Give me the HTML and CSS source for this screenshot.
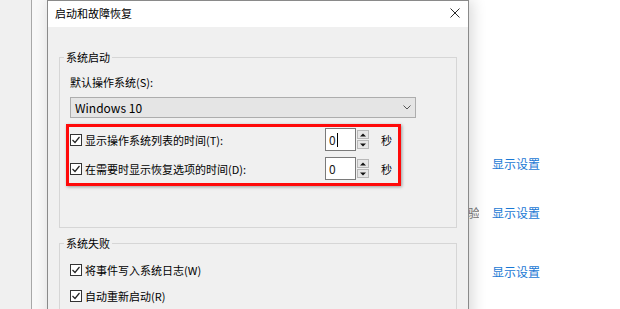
FILE: index.html
```html
<!DOCTYPE html>
<html lang="zh-CN">
<head>
<meta charset="utf-8">
<title>启动和故障恢复</title>
<link rel="stylesheet" href="styles.css">
</head>
<body>
<div class="screen">
  <div class="side-left"></div>
  <div class="side-strip"></div>
  <div class="dialog">
    <div class="titlebar">
      <span class="title">启动和故障恢复</span>
      <svg class="close" width="10" height="10" viewBox="0 0 10 10"><path d="M0.5 0.5 L9.5 9.5 M9.5 0.5 L0.5 9.5" stroke="#2b2b2b" stroke-width="1" fill="none"/></svg>
    </div>
    <div class="dialog-body">
      <fieldset class="group">
        <legend>系统启动</legend>
        <div class="group-body group-body-start">
          <div class="label">默认操作系统(S):</div>
          <div class="select">
            <span class="select-text">Windows 10</span>
            <svg class="chevron" width="8" height="5" viewBox="0 0 8 5"><path d="M0.5 0.5 L4 4 L7.5 0.5" stroke="#555" stroke-width="1" fill="none"/></svg>
          </div>
          <div class="highlight">
            <div class="row">
              <span class="check"><svg width="12" height="12" viewBox="0 0 12 12"><path d="M2.5 6 L5 8.5 L9.5 3" stroke="#222" stroke-width="1.2" fill="none"/></svg></span>
              <span class="row-label">显示操作系统列表的时间(T):</span>
              <div class="spin">
                <div class="spin-field">0<span class="caret"></span></div>
                <div class="spin-buttons">
                  <span class="spin-btn"><svg width="6" height="4" viewBox="0 0 6 4"><path d="M0 3.5 L3 0.5 L6 3.5 Z" fill="#111"/></svg></span>
                  <span class="spin-btn"><svg width="6" height="4" viewBox="0 0 6 4"><path d="M0 0.5 L3 3.5 L6 0.5 Z" fill="#111"/></svg></span>
                </div>
              </div>
              <span class="unit">秒</span>
            </div>
            <div class="row row-second">
              <span class="check"><svg width="12" height="12" viewBox="0 0 12 12"><path d="M2.5 6 L5 8.5 L9.5 3" stroke="#222" stroke-width="1.2" fill="none"/></svg></span>
              <span class="row-label">在需要时显示恢复选项的时间(D):</span>
              <div class="spin">
                <div class="spin-field">0</div>
                <div class="spin-buttons">
                  <span class="spin-btn"><svg width="6" height="4" viewBox="0 0 6 4"><path d="M0 3.5 L3 0.5 L6 3.5 Z" fill="#111"/></svg></span>
                  <span class="spin-btn"><svg width="6" height="4" viewBox="0 0 6 4"><path d="M0 0.5 L3 3.5 L6 0.5 Z" fill="#111"/></svg></span>
                </div>
              </div>
              <span class="unit">秒</span>
            </div>
          </div>
        </div>
      </fieldset>
      <fieldset class="group group-fail">
        <legend>系统失败</legend>
        <div class="group-body group-body-fail">
          <div class="check-row">
            <span class="check"><svg width="12" height="12" viewBox="0 0 12 12"><path d="M2.5 6 L5 8.5 L9.5 3" stroke="#222" stroke-width="1.2" fill="none"/></svg></span>
            <span class="row-label">将事件写入系统日志(W)</span>
          </div>
          <div class="check-row check-row-next">
            <span class="check"><svg width="12" height="12" viewBox="0 0 12 12"><path d="M2.5 6 L5 8.5 L9.5 3" stroke="#222" stroke-width="1.2" fill="none"/></svg></span>
            <span class="row-label">自动重新启动(R)</span>
          </div>
        </div>
      </fieldset>
    </div>
  </div>
  <div class="side-right">
    <a class="link link-first">显示设置</a>
    <div class="partial-row">
      <span class="hidden-char">验</span>
      <a class="link">显示设置</a>
    </div>
    <a class="link link-third">显示设置</a>
  </div>
</div>
</body>
</html>
```

FILE: styles.css
```css
* { box-sizing: border-box; }
html, body { margin: 0; padding: 0; }
body {
  width: 620px;
  height: 309px;
  overflow: hidden;
  background: #fff;
  font-family: "Noto Sans CJK SC", "Microsoft YaHei", sans-serif;
  font-size: 11px;
  color: #000;
}
.screen {
  display: flex;
  align-items: flex-start;
  height: 309px;
  overflow: hidden;
}
.side-left {
  width: 32px;
  height: 309px;
  flex: none;
  background: #f0f0f0;
  border-right: 1px solid #a8a8a8;
}
.side-strip {
  width: 15px;
  height: 309px;
  flex: none;
  background: #f8f8f8;
}
.dialog {
  width: 422px;
  height: 340px;
  flex: none;
  position: relative;
  z-index: 1;
  background: #f0f0f0;
  border: 1px solid #8a8a8a;
  box-shadow: 3px 0 14px rgba(0, 0, 0, 0.16);
}
.titlebar {
  height: 26px;
  background: #fff;
  display: flex;
  align-items: center;
  justify-content: space-between;
  padding: 0 8px 2px 7px;
}
.title { line-height: 14px; }
.close { display: block; }
.dialog-body {
  padding: 23px 10px 0 11px;
}
.group {
  width: 398px;
  margin: 0;
  padding: 0;
  min-width: 0;
  border: 1px solid #d6d6d6;
}
.group legend {
  margin-left: 4px;
  padding: 0 2px;
  line-height: 14px;
  font-size: 11px;
}
.group-fail { margin-top: 8px; }
.group-body-start { padding: 11px 10px 41px 10px; }
.group-body-fail { padding: 12px 10px 20px 10px; }
.label { line-height: 14px; }
.select {
  margin-top: 8px;
  width: 346px;
  height: 21px;
  background: #e5e5e5;
  border: 1px solid #adadad;
  display: flex;
  align-items: center;
  justify-content: space-between;
  padding: 0 4px 0 4px;
}
.select-text { font-size: 12px; line-height: 14px; }
.chevron { display: block; margin-right: 0; }
.highlight {
  margin-top: 6px;
  margin-left: -4px;
  width: 335px;
  height: 62px;
  border: 3px solid #ff0a0a;
  box-shadow: 1px 1px 3px rgba(0, 0, 0, 0.35);
  padding: 1px 6px 0 1px;
}
.row {
  display: flex;
  align-items: center;
  height: 23px;
}
.row-second { margin-top: 6px; }
.check {
  width: 12px;
  height: 12px;
  flex: none;
  background: #fff;
  border: 1px solid #333;
  display: flex;
  align-items: center;
  justify-content: center;
}
.check svg { display: block; flex: none; }
.row-label { margin-left: 3px; line-height: 14px; flex: 1; }
.spin {
  display: flex;
  align-items: center;
  height: 23px;
}
.spin-field {
  width: 31px;
  height: 23px;
  background: #fff;
  border: 1px solid #7a7a7a;
  padding-left: 3px;
  font-size: 12px;
  line-height: 21px;
  color: #1a1a1a;
  display: flex;
  align-items: center;
}
.caret {
  width: 1px;
  height: 14px;
  background: #000;
  margin-left: 1px;
}
.spin-buttons {
  margin-left: 1px;
  width: 12px;
  height: 19px;
  display: flex;
  flex-direction: column;
  gap: 1px;
}
.spin-btn {
  flex: 1;
  background: #e6e6e6;
  border: 1px solid #b8b8b8;
  display: flex;
  align-items: center;
  justify-content: center;
}
.spin-btn svg { display: block; }
.unit { margin-left: 12px; line-height: 14px; }
.check-row {
  display: flex;
  align-items: center;
  height: 16px;
}
.check-row-next { margin-top: 10px; }
.side-right {
  flex: 1;
  height: 309px;
  background: #fff;
  padding: 156px 0 0 23px;
  display: flex;
  flex-direction: column;
  align-items: flex-start;
}
.link {
  color: #1a78d4;
  font-size: 12px;
  line-height: 16px;
  text-decoration: none;
}
.partial-row {
  margin-top: 33px;
  margin-left: -24px;
  display: flex;
  align-items: center;
}
.hidden-char {
  width: 11px;
  color: #7a7a7a;
  font-size: 12px;
  line-height: 16px;
  overflow: hidden;
}
.partial-row .link { margin-left: 13px; }
.link-third { margin-top: 43px; }
```
